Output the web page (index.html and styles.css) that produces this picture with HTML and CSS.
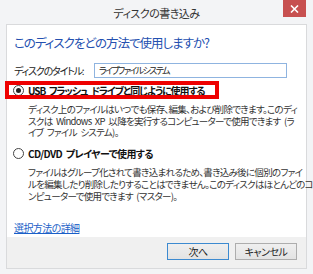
FILE: index.html
```html
<!DOCTYPE html>
<html lang="ja">
<head>
<meta charset="utf-8">
<link rel="stylesheet" href="styles.css">
</head>
<body>
<div class="window">
  <div class="titlebar">
    <span class="title">ディスクの書き込み</span>
    <div class="close"><svg width="9" height="8" viewBox="0 0 9 8"><path d="M1 0.5 L8 7.5 M8 0.5 L1 7.5" stroke="#fff" stroke-width="1.6"/></svg></div>
  </div>
  <div class="panel">
    <div class="content">
      <h1 class="heading">このディスクをどの方法で使用しますか?</h1>
      <div class="title-row">
        <span class="label">ディスクのタイトル:</span>
        <div class="input">ライブファイルシステム</div>
      </div>
      <div class="option">
        <span class="radio checked"></span>
        <span class="opt-label">USB フラッシュ ドライブと同じように使用する</span>
        <div class="highlight"></div>
      </div>
      <p class="desc">ディスク上のファイルはいつでも保存、編集、および削除できます。このディ<br>スクは Windows XP 以降を実行するコンピューターで使用できます (ラ<br>イブ ファイル システム)。</p>
      <div class="option second">
        <span class="radio"></span>
        <span class="opt-label cd">CD/DVD プレイヤーで使用する</span>
      </div>
      <p class="desc">ファイルはグループ化されて書き込まれるため、書き込み後に個別のファイ<br>ルを編集したり削除したりすることはできません。このディスクはほとんどのコ<br>ンピューターで使用できます (マスター)。</p>
      <a class="link" href="#">選択方法の詳細</a>
    </div>
    <div class="footer">
      <button class="btn default">次へ</button>
      <button class="btn">キャンセル</button>
    </div>
  </div>
</div>
</body>
</html>
```
FILE: styles.css
```css
* { box-sizing: border-box; }
html, body { margin: 0; padding: 0; }
body {
  width: 313px;
  height: 274px;
  background: #f3f4f6;
  font-family: "Noto Sans CJK JP", "Noto Sans", sans-serif;
  font-feature-settings: "palt" 1;
  color: #222;
  overflow: hidden;
}
.window {
  width: 313px;
  height: 274px;
  display: flex;
  flex-direction: column;
}
.titlebar {
  position: relative;
  height: 24px;
  display: flex;
  align-items: center;
  justify-content: center;
}
.title {
  font-size: 11px;
  letter-spacing: -0.5px;
  line-height: 16px;
  color: #333;
  margin-top: 2px;
}
.close {
  position: absolute;
  top: 0;
  right: 7px;
  width: 23px;
  height: 17px;
  background: #c75050;
  display: flex;
  align-items: center;
  justify-content: center;
}
.panel {
  margin: 0 6px 0 6px;
  height: 245px;
  border: 1px solid #d9dadc;
  display: flex;
  flex-direction: column;
}
.content {
  flex: 1;
  background: #fff;
  padding: 9px 8px 0 7px;
}
.heading {
  margin: 0;
  font-size: 12.5px;
  letter-spacing: -1px;
  font-weight: normal;
  line-height: 18px;
  color: #2450b0;
  white-space: nowrap;
}
.title-row {
  margin-top: 11px;
  display: flex;
  align-items: center;
  height: 15px;
}
.label {
  font-size: 10px;
  letter-spacing: -1.2px;
  width: 80px;
  color: #222;
  white-space: nowrap;
}
.input {
  width: 193px;
  height: 15px;
  border: 1px solid #8fb4e0;
  font-size: 9px;
  letter-spacing: -1.6px;
  line-height: 13px;
  padding-left: 4px;
  white-space: nowrap;
}
.option {
  position: relative;
  margin-top: 5px;
  margin-left: -1px;
  height: 14px;
  display: flex;
  align-items: center;
}
.option.second { margin-top: 7px; }
.radio {
  width: 11px;
  height: 11px;
  border: 1px solid #444;
  border-radius: 50%;
  background: #fff;
  display: flex;
  align-items: center;
  justify-content: center;
  margin-right: 4px;
}
.radio.checked::after {
  content: "";
  width: 5px;
  height: 5px;
  border-radius: 50%;
  background: #222;
}
.opt-label {
  font-size: 10px;
  letter-spacing: -1.1px;
  word-spacing: 2.5px;
  font-weight: bold;
  white-space: nowrap;
  color: #111;
}
.opt-label.cd {
  letter-spacing: -0.6px;
  word-spacing: 2px;
}
.highlight {
  position: absolute;
  left: -8px;
  top: -2px;
  width: 214px;
  height: 18px;
  border: 4px solid #ee0000;
}
.desc {
  margin: 7px 0 0 14px;
  font-size: 9.5px;
  letter-spacing: -0.7px;
  word-spacing: 2px;
  line-height: 11.7px;
  white-space: nowrap;
  color: #333;
}
.link {
  display: inline-block;
  margin-top: 18px;
  font-size: 10px;
  letter-spacing: -0.6px;
  color: #1a5fc8;
  text-decoration: underline;
}
.footer {
  height: 33px;
  background: #f0f0f0;
  display: flex;
  justify-content: flex-end;
  align-items: flex-start;
  gap: 6px;
  padding: 6px 9px 0 0;
}
.btn {
  width: 62px;
  height: 17px;
  border: 1px solid #adadad;
  background: linear-gradient(#efefef, #e3e3e3);
  font-family: "Noto Sans CJK JP", sans-serif;
  font-feature-settings: "palt" 1;
  font-size: 10px;
  letter-spacing: -0.5px;
  line-height: 14px;
  color: #222;
  padding: 0;
}
.btn.default {
  border-color: #3c8ad0;
}
```
